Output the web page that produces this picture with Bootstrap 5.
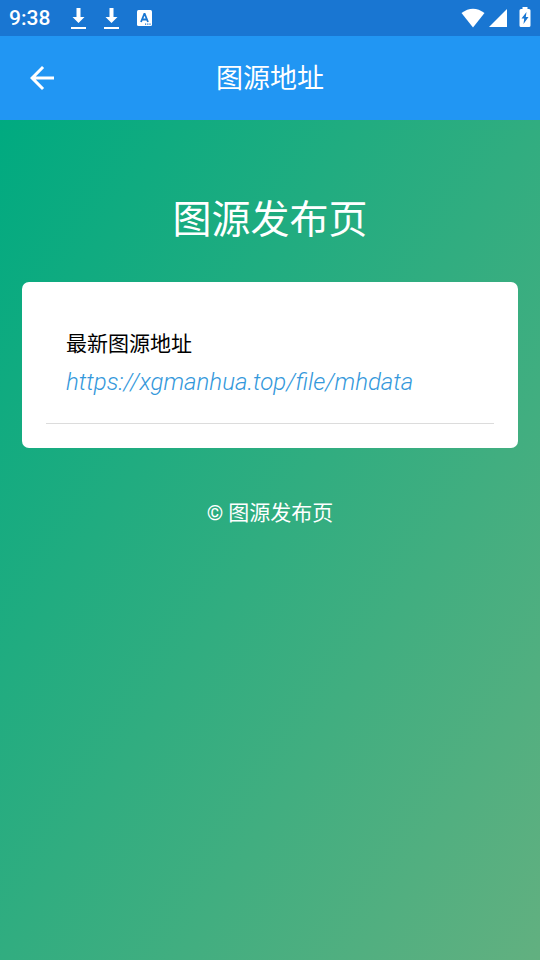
<!DOCTYPE html>
<html lang="zh-CN">
<head>
<meta charset="utf-8">
<meta name="viewport" content="width=device-width, initial-scale=1">
<title>图源地址</title>
<link href="https://cdn.jsdelivr.net/npm/bootstrap@5.3.0/dist/css/bootstrap.min.css" rel="stylesheet">
<style>
body { font-family: Roboto, "Noto Sans CJK SC", sans-serif; }
.status-bar { height: 36px; background: #1976d2; padding: 0 9px; }
.clock { font-size: 21px; font-weight: 500; line-height: 38px; }
.app-bar { height: 84px; background: #2196f3; padding: 0 24px; }
.app-title { font-size: 27px; line-height: 36px; font-weight: 400; padding-top: 2px; }
.bar-side { width: 36px; height: 36px; }
.page-body { background: linear-gradient(to bottom right, #00aa80, #62b080); padding: 72px 22px 24px; }
.page-heading { font-size: 39px; line-height: 56px; font-weight: 400; margin-bottom: 34px; }
.source-card { border-radius: 7px; padding: 24px; }
.source-item { padding: 20px 20px 23px; border-bottom: 1px solid #dcdcdc; }
.source-label { font-size: 21px; line-height: 36px; font-weight: 400; }
.source-link { font-size: 24px; line-height: 36px; font-weight: 300; color: #3498db; margin-top: 2px; }
.page-foot { font-size: 21px; line-height: 32px; margin-top: 49px; }
</style>
<script defer src="https://cdn.jsdelivr.net/npm/bootstrap@5.3.0/dist/js/bootstrap.bundle.min.js"></script>
</head>
<body class="min-vh-100 d-flex flex-column">
<div class="status-bar d-flex align-items-center justify-content-between text-white">
  <div class="d-flex align-items-center">
    <span class="clock me-3">9:38</span>
    <svg class="ms-1 me-3" width="17" height="22" viewBox="0 0 17 22" fill="#fff" aria-hidden="true"><path d="M6.500 1h4v9h4l-6 6-6-6h4zM1 20h15v2H1z"/></svg>
    <svg class="me-3" width="17" height="22" viewBox="0 0 17 22" fill="#fff" aria-hidden="true"><path d="M6.500 1h4v9h4l-6 6-6-6h4zM1 20h15v2H1z"/></svg>
    <svg width="17" height="18" viewBox="0 0 17 18" aria-hidden="true"><rect x="1" y="1" width="15" height="16" rx="1.500" fill="#fff"/><path d="M5 13L8.300 5h.4L12 13M6.500 10.500h4" fill="none" stroke="#1976d2" stroke-width="1.800"/><path d="M9 15.200h1.200m1 0h1.200m1 0h1.200" stroke="#1976d2" stroke-width="1.200"/></svg>
  </div>
  <div class="d-flex align-items-center">
    <svg width="24" height="20" viewBox="0 0 24 20" fill="#fff" aria-hidden="true"><path d="M.5 5Q12-3.500 23.500 5L12 19.500z"/></svg>
    <svg class="ms-1 me-2" width="18" height="20" viewBox="0 0 18 20" fill="#fff" aria-hidden="true"><path d="M18 1v18H0z"/></svg>
    <svg class="ms-1" width="12" height="22" viewBox="0 0 12 22" aria-hidden="true"><path fill="#fff" d="M3.500 0h5v2H10q1.500 0 1.500 1.500v15Q11.500 20 10 20H2Q.5 20 .5 18.500v-15Q.5 2 2 2h1.500z"/><path fill="#1976d2" d="M7.500 5L2.500 11.500h2.700L4.500 17l5-7H6.800z"/></svg>
  </div>
</div>
<header class="app-bar d-flex align-items-center justify-content-between text-white">
  <button type="button" class="btn bar-side p-0 border-0 d-flex align-items-center justify-content-center" aria-label="返回">
    <svg width="36" height="36" viewBox="0 0 24 24" fill="#fff" aria-hidden="true"><path d="M20 11H7.830l5.590-5.590L12 4l-8 8 8 8 1.410-1.410L7.830 13H20z"/></svg>
  </button>
  <h1 class="app-title m-0">图源地址</h1>
  <span class="bar-side"></span>
</header>
<main class="page-body flex-grow-1">
  <h2 class="page-heading text-center text-white">图源发布页</h2>
  <section class="source-card bg-white">
    <div class="source-item">
      <h3 class="source-label text-black m-0">最新图源地址</h3>
      <a class="source-link fst-italic text-decoration-none d-block" href="https://xgmanhua.top/file/mhdata">https://xgmanhua.top/file/mhdata</a>
    </div>
  </section>
  <footer class="page-foot text-center text-white">© 图源发布页</footer>
</main>
</body>
</html>
